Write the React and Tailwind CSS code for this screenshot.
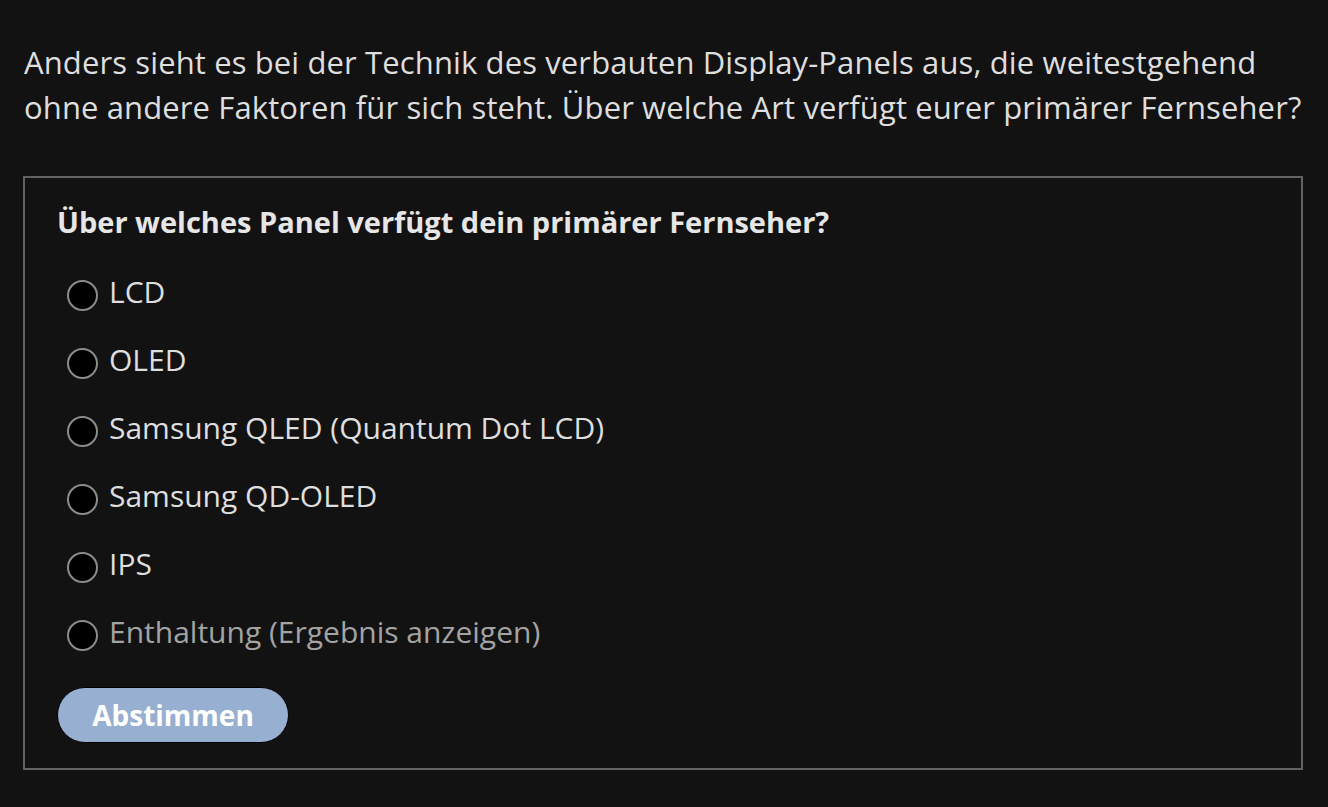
import React from "react";

const options = [
  { label: "LCD", muted: false },
  { label: "OLED", muted: false },
  { label: "Samsung QLED (Quantum Dot LCD)", muted: false },
  { label: "Samsung QD-OLED", muted: false },
  { label: "IPS", muted: false },
  { label: "Enthaltung (Ergebnis anzeigen)", muted: true },
];

export default function App() {
  return (
    <div className="bg-[#121212] min-h-[807px] w-full px-[23px] pt-[40px] font-['Open_Sans',sans-serif]">
      <p className="text-[31px] leading-[45px] tracking-[0.12px] text-[#dedede] pl-[1px]">
        Anders sieht es bei der Technik des verbauten Display-Panels aus, die weitestgehend
        <br />
        ohne andere Faktoren für sich steht. Über welche Art verfügt eurer primärer Fernseher?
      </p>
      <div className="mt-[46px] w-[1280px] border-2 border-[#626262] pl-[32px] pt-[24px] pb-[25px]">
        <h2 className="text-[29px] leading-[40px] font-bold text-[#e6e6e6]">
          Über welches Panel verfügt dein primärer Fernseher?
        </h2>
        <div className="mt-[16px] flex flex-col">
          {options.map((o) => (
            <label key={o.label} className="h-[68px] flex items-center">
              <span className="ml-[10px] mt-[7px] w-[31px] h-[31px] rounded-full border-2 border-[#8c8c8c] bg-black shrink-0" />
              <span
                className={
                  "ml-[11px] text-[30px] leading-[40px] " +
                  (o.muted ? "text-[#a3a3a3]" : "text-[#dedede]")
                }
              >
                {o.label}
              </span>
            </label>
          ))}
        </div>
        <button className="mt-[21px] w-[232px] h-[56px] rounded-full bg-[#97afd0] border border-black text-white font-bold text-[28px] leading-none flex items-center justify-center">
          Abstimmen
        </button>
      </div>
    </div>
  );
}
